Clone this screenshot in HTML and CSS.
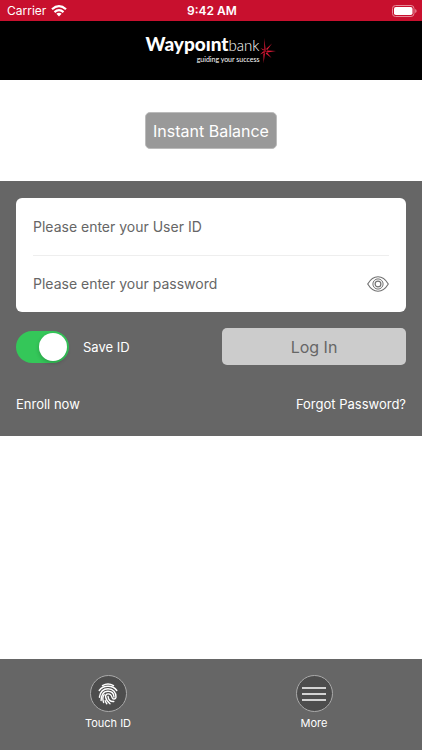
FILE: index.html
```html
<!DOCTYPE html>
<html lang="en">
<head>
<meta charset="utf-8">
<meta name="viewport" content="width=device-width, initial-scale=1">
<title>Waypoint Bank</title>
<link rel="stylesheet" href="styles.css">
</head>
<body>
<div class="status">
  <div class="carrier">
    <span>Carrier</span>
    <svg width="16" height="12" viewBox="0 0 16 12" aria-hidden="true"><g fill="none" stroke="#fff" stroke-width="2.2"><path d="M1 4.3Q8-2 15 4.3"/><path d="M3.5 7.1Q8 3.1 12.5 7.1"/></g><path d="M5.4 8.8Q8 6.8 10.6 8.8L8 11.6z" fill="#fff"/></svg>
  </div>
  <span class="time">9:42 AM</span>
  <svg class="battery" width="25" height="12" viewBox="0 0 25 12" aria-hidden="true"><rect x=".5" y=".5" width="21.5" height="11" rx="3" fill="none" stroke="#e78b99"/><rect x="2" y="2" width="18.5" height="8" rx="1.8" fill="#fff"/><path d="M23.2 4v4q1.4-.6 1.4-2t-1.4-2" fill="#e78b99"/></svg>
</div>
<header class="brand">
  <div class="logo">
    <div class="words">
      <div class="name"><b>Waypoınt</b><span>bank</span></div>
      <div class="tagline">guiding your success</div>
    </div>
    <svg class="star" width="16" height="28" viewBox="0 0 16 28" aria-hidden="true"><g fill="#e01a38"><path d="M4.2 1L5.6 12.4 4.4 13.4z"/><path d="M12 6.5L7.2 13 6 12z"/><path d="M16 14L7 15.6V13.4z"/><path d="M11.5 21L5.6 16.4 6.8 15.2z"/><path d="M3.6 26L3.4 17 5 16z"/><path d="M0 17.6L3.4 14.2 4 15.8z"/><path d="M.4 11L4 12.6 3.4 13.6z"/></g><path d="M4.5 12v5M3 14.4h4.5M6 12.4l-2 4" stroke="#a00c22" stroke-width=".8"/></svg>
  </div>
</header>
<main>
  <div class="balance"><button class="instant" type="button">Instant Balance</button></div>
  <form class="login">
    <div class="card">
      <div class="field"><input type="text" placeholder="Please enter your User ID" aria-label="User ID"></div>
      <div class="field">
        <input type="password" placeholder="Please enter your password" aria-label="Password">
        <button class="reveal" type="button" aria-label="Show password"><svg width="22" height="16" viewBox="0 0 22 16" fill="none" stroke="#707070"><path d="M.7 8Q5 .8 11 .8T21.3 8Q17 15.2 11 15.2T.7 8z" stroke-width="1.1"/><circle cx="11" cy="8" r="5.1"/><circle cx="11" cy="8" r="2.9" stroke-width="1.2"/></svg></button>
      </div>
    </div>
    <div class="actions">
      <label class="save"><input class="switch" type="checkbox" checked><span>Save ID</span></label>
      <button class="submit" type="submit">Log In</button>
    </div>
    <div class="links"><a href="#">Enroll now</a><a href="#">Forgot Password?</a></div>
  </form>
</main>
<nav class="tabs">
  <a class="tab" href="#">
    <span class="disc"><svg width="20" height="22" viewBox="0 0 20 22" fill="none" stroke="#fff" stroke-width="1.4" stroke-linecap="round" aria-hidden="true"><path d="M4.5 2.6Q10-.6 15.5 2.6"/><path d="M1.2 7.5Q4.2 3.3 10 3.3T18.8 7.5"/><path d="M1.4 14.2C2.2 9.5 4.2 5.8 10 5.8c5.2 0 8.2 3.5 8 8.4-.2 2.3-3.3 2.5-3.9.4-.5-2-1.6-3.7-4-3.7-3.6 0-3.6 5.2 1.9 9.8"/><path d="M3.1 17.5C3.1 12.7 4.9 8.3 10 8.3c3.9 0 5.8 2.8 6 5.7"/><path d="M5.6 19.6C4.5 16.5 4.8 13.3 6.2 11.8"/><path d="M10.1 13.5c.2 3.3 2.2 5.4 5.7 5"/><path d="M8.8 20.8q-1.1-1.4-1.6-3.2"/></svg></span>
    <span>Touch ID</span>
  </a>
  <a class="tab" href="#">
    <span class="disc"><svg width="24" height="14" viewBox="0 0 24 14" stroke="#fff" stroke-width="1.6" aria-hidden="true"><path d="M0 1h24M0 7h24M0 13h24"/></svg></span>
    <span>More</span>
  </a>
</nav>
</body>
</html>
```
FILE: styles.css
```css
* { box-sizing: border-box; }

body {
  display: flex;
  flex-direction: column;
  min-height: 100vh;
  margin: 0;
  background: #fff;
  color: #fff;
  font-family: Inter, "Liberation Sans", sans-serif;
  font-size: 13px;
  line-height: 20px;
}

button, input { font: inherit; }
a { color: inherit; text-decoration: none; }
svg { display: block; }

.status {
  display: grid;
  grid-template-columns: 1fr auto 1fr;
  align-items: center;
  height: 21px;
  padding: 0 5px 0 7px;
  background: #c8102e;
  font-size: 12px;
}
.carrier { display: flex; align-items: center; gap: 5px; }
.time { font-weight: 600; }
.battery { justify-self: end; }

.brand {
  display: flex;
  justify-content: center;
  height: 59px;
  padding-top: 13px;
  background: #000;
}
.logo { display: flex; gap: 1px; }
.star { margin-top: 3px; }
.words { text-align: right; }
.name {
  font-family: Lato, sans-serif;
  font-size: 19px;
  line-height: 20px;
}
.name b { font-weight: 900; }
.name span { font-size: 15px; font-weight: 300; }
.tagline {
  font-family: Lato, sans-serif;
  font-size: 7px;
  line-height: 8px;
}

.balance { display: flex; justify-content: center; padding: 32px 16px; }
.instant {
  height: 37px;
  padding: 0 7px;
  border: 1px solid #bbb;
  border-radius: 5px;
  background: #999;
  color: #fff;
  font-size: 16px;
}

.login { padding: 17px 16px 22px; background: #666; }
.card { padding: 0 17px; border-radius: 6px; background: #fff; }
.field { display: flex; align-items: center; height: 57px; }
.field + .field { border-top: 1px solid #eee; }
.field input {
  flex: 1;
  min-width: 0;
  padding: 0;
  border: 0;
  outline: 0;
  background: none;
  color: #666;
  font-size: 14px;
}
.field input::placeholder { color: #666; opacity: 1; }
.reveal { padding: 0; border: 0; background: none; }

.actions {
  display: grid;
  grid-template-columns: 1fr 184px;
  align-items: center;
  margin-top: 16px;
}
.save { display: flex; align-items: center; gap: 14px; }
.switch {
  appearance: none;
  display: flex;
  width: 53px;
  height: 32px;
  margin: 0;
  padding: 2px;
  border-radius: 16px;
  background: #999;
}
.switch::before {
  content: "";
  width: 28px;
  height: 28px;
  border-radius: 50%;
  background: #fff;
  box-shadow: 0 2px 4px rgba(0, 0, 0, .2);
}
.switch:checked { justify-content: flex-end; background: #34c759; }
.submit {
  height: 37px;
  padding: 0;
  border: 0;
  border-radius: 5px;
  background: #ccc;
  color: #666;
  font-size: 16px;
}
.links { display: flex; justify-content: space-between; margin-top: 29px; }

.tabs {
  display: grid;
  grid-template-columns: 1fr 1fr;
  margin-top: auto;
  padding: 16px 5px;
  background: #666;
  font-size: 11px;
  line-height: 22px;
}
.tab { display: flex; flex-direction: column; align-items: center; }
.disc {
  display: grid;
  place-items: center;
  width: 37px;
  height: 37px;
  border: 1px solid #aaa;
  border-radius: 50%;
  background: #4d4d4d;
}
```
